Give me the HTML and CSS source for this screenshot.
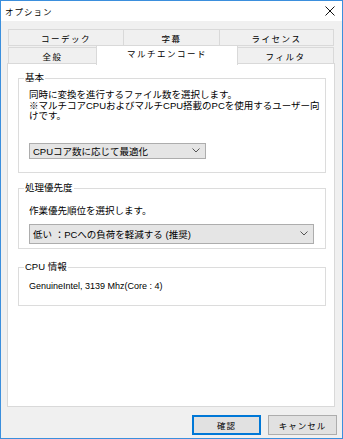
FILE: index.html
```html
<!DOCTYPE html>
<html lang="ja">
<head>
  <meta charset="UTF-8">
  <title>オプション</title>
  <link rel="stylesheet" href="styles.css">
</head>
<body>
  <div class="window">
    <div class="titlebar">
      <span class="title">オプション</span>
      <svg class="close" width="10" height="10" viewBox="0 0 10 10">
        <path d="M0.5 0.5 L9.5 9.5 M9.5 0.5 L0.5 9.5" stroke="#111" stroke-width="1" fill="none"/>
      </svg>
    </div>
    <div class="content">
      <div class="tabs">
        <div class="tab-row">
          <div class="tab w116">コーデック</div>
          <div class="tab w97">字幕</div>
          <div class="tab w115">ライセンス</div>
        </div>
        <div class="tab-row front">
          <div class="tab w89">全般</div>
          <div class="tab w142 active">マルチエンコード</div>
          <div class="tab w97">フィルタ</div>
        </div>
      </div>
      <div class="panel">
        <fieldset class="group g-basic">
          <legend>基本</legend>
          <p class="desc">同時に変換を進行するファイル数を選択します。<br>※マルチコアCPUおよびマルチCPU搭載のPCを使用するユーザー向<br>けです。</p>
          <div class="combo short">
            <span>CPUコア数に応じて最適化</span>
            <svg width="8" height="5" viewBox="0 0 8 5"><path d="M0.5 0.5 L4 4 L7.5 0.5" stroke="#555" fill="none"/></svg>
          </div>
        </fieldset>
        <fieldset class="group g-priority">
          <legend>処理優先度</legend>
          <p class="desc">作業優先順位を選択します。</p>
          <div class="combo long">
            <span>低い ：PCへの負荷を軽減する (推奨)</span>
            <svg width="8" height="5" viewBox="0 0 8 5"><path d="M0.5 0.5 L4 4 L7.5 0.5" stroke="#555" fill="none"/></svg>
          </div>
        </fieldset>
        <fieldset class="group g-cpu">
          <legend>CPU 情報</legend>
          <p class="desc latin">GenuineIntel, 3139 Mhz(Core : 4)</p>
        </fieldset>
      </div>
      <div class="buttons">
        <button class="btn default">確認</button>
        <button class="btn">キャンセル</button>
      </div>
    </div>
  </div>
</body>
</html>
```

FILE: styles.css
```css
body {
  margin: 0;
  font-family: "Liberation Sans", "Noto Sans CJK JP", sans-serif;
  color: #000;
  overflow: hidden;
}
.window {
  width: 341px;
  height: 437px;
  border: 1px solid #3b8fdd;
  background: #f0f0f0;
}
.titlebar {
  height: 20px;
  background: #fff;
  display: flex;
  align-items: center;
  justify-content: space-between;
  padding: 0 7px 0 4px;
}
.title {
  font-size: 8.5px;
  letter-spacing: 1px;
}
.content {
  padding-top: 8px;
}
.tabs {
  margin-left: 7px;
  width: 326px;
}
.tab-row {
  display: flex;
  align-items: flex-end;
}
.tab-row.front {
  margin-top: -1px;
}
.tab {
  height: 15px;
  border: 1px solid #d9d9d9;
  margin-left: -1px;
  box-sizing: content-box;
  display: flex;
  align-items: center;
  justify-content: center;
  font-size: 8.5px;
  letter-spacing: 1.5px;
  background: #f0f0f0;
}
.tab:first-child {
  margin-left: 0;
}
.w116 { width: 114px; }
.w115 { width: 113px; }
.w97 { width: 95px; }
.w89 { width: 87px; }
.w142 { width: 140px; }
.tab.active {
  height: 18px;
  line-height: 17px;
  background: #fff;
  border-bottom: none;
  margin-bottom: -1px;
  padding-bottom: 1px;
  align-items: flex-start;
  position: relative;
  z-index: 1;
}
.panel {
  margin: -1px 0 0 6px;
  width: 326px;
  height: 334px;
  border: 1px solid #d9d9d9;
  background: #fff;
  padding-top: 8px;
  box-sizing: content-box;
}
.group {
  margin: 0 0 0 10px;
  width: 308px;
  border: 1px solid #dcdcdc;
  padding: 0 0 0 10px;
  box-sizing: border-box;
}
.group legend {
  font-size: 9.5px;
  line-height: 12px;
  padding: 0 1px;
  margin-left: -5px;
}
.desc {
  margin: 0;
  font-size: 9.5px;
  line-height: 10.5px;
}
.latin {
  font-size: 9px;
}
.g-basic {
  height: 101px;
}
.g-basic .desc {
  margin-top: 6px;
}
.g-priority {
  margin-top: 9px;
  height: 67px;
}
.g-priority .desc {
  margin-top: 12px;
}
.g-cpu {
  margin-top: 12px;
  height: 45px;
}
.g-cpu .desc {
  margin-top: 8px;
}
.combo {
  display: flex;
  align-items: center;
  justify-content: space-between;
  background: #e5e5e5;
  border: 1px solid #adadad;
  box-sizing: border-box;
  padding: 0 5px 0 3px;
  font-size: 9.5px;
}
.combo.short {
  width: 177px;
  height: 16px;
  margin-top: 21px;
}
.combo.long {
  width: 285px;
  height: 20px;
  margin-top: 7px;
}
.buttons {
  display: flex;
  justify-content: flex-end;
  gap: 7px;
  padding-right: 5px;
  margin-top: 8px;
}
.btn {
  width: 69px;
  height: 20px;
  margin: 0;
  padding: 0;
  border: 1px solid #adadad;
  background: #e1e1e1;
  font-family: "Liberation Sans", "Noto Sans CJK JP", sans-serif;
  font-size: 8.5px;
  letter-spacing: 1px;
  color: #000;
}
.btn.default {
  border-color: #0078d7;
  box-shadow: inset 0 0 0 1px #0078d7;
}
```
